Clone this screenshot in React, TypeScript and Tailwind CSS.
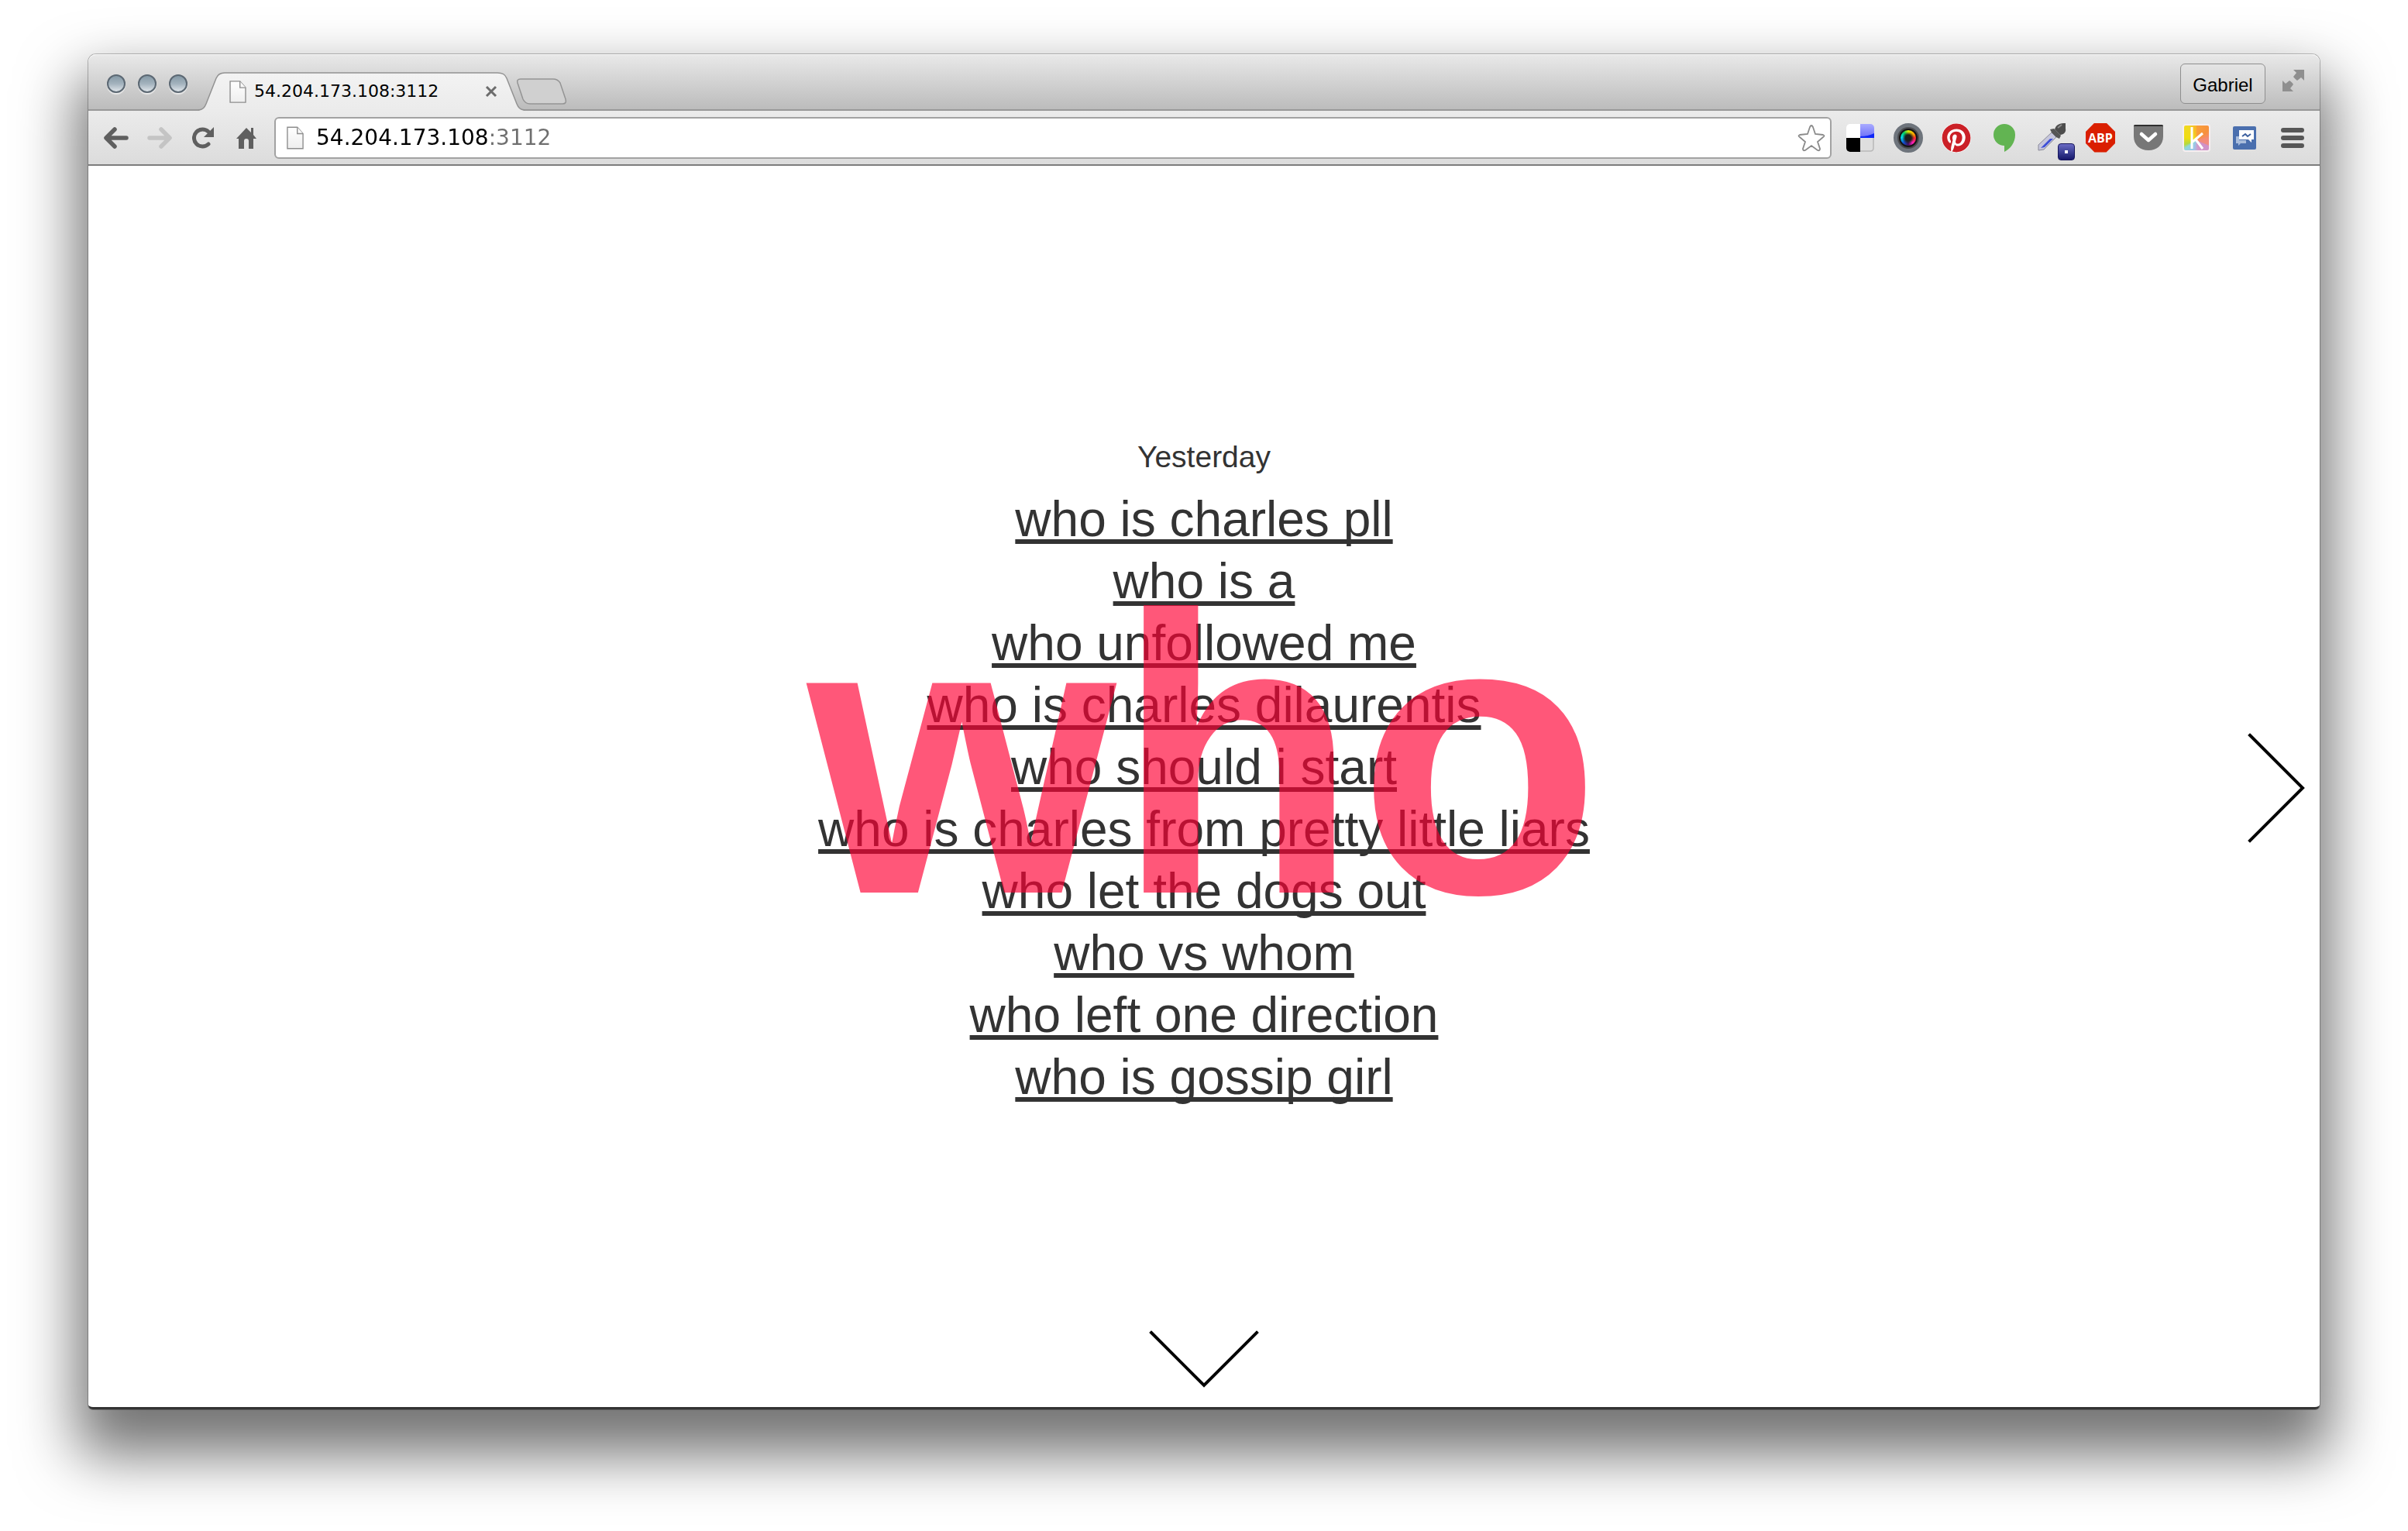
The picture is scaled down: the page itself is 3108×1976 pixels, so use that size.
import type { ReactNode } from "react";
import { FaPinterest } from "react-icons/fa";

const queries = [
  "who is charles pll",
  "who is a",
  "who unfollowed me",
  "who is charles dilaurentis",
  "who should i start",
  "who is charles from pretty little liars",
  "who let the dogs out",
  "who vs whom",
  "who left one direction",
  "who is gossip girl",
];

function PageIcon({ className }: { className: string }) {
  return (
    <svg viewBox="0 0 24 32" className={className} aria-hidden="true">
      <defs>
        <linearGradient id="paper" x1="0" y1="0" x2="0" y2="1">
          <stop offset="0" stopColor="#fff" />
          <stop offset="1" stopColor="#eee" />
        </linearGradient>
      </defs>
      <path d="M1 1h14l8 9v21H1z" fill="url(#paper)" stroke="#8d8d8d" strokeWidth="1.5" />
      <path d="M15 1v9h8" fill="#fafafa" stroke="#8d8d8d" strokeWidth="1.5" />
    </svg>
  );
}

function TrafficLight({ label }: { label: string }) {
  return (
    <button
      aria-label={label}
      className="size-6 rounded-full border-2 border-[#5c6873] bg-linear-to-b from-[#8599a6] via-[#a3b2bd] to-[#dfe5ea] shadow-[0_2px_1px_rgba(255,255,255,0.6)]"
    />
  );
}

function ToolButton({ label, children }: { label: string; children: ReactNode }) {
  return (
    <button aria-label={label} className="relative flex h-[38px] w-[38px] shrink-0 items-center justify-center">
      {children}
    </button>
  );
}

function NavButton({ label, children }: { label: string; children: ReactNode }) {
  return (
    <button aria-label={label} className="flex h-8 w-8 shrink-0 items-center justify-center">
      {children}
    </button>
  );
}

function TitleBar() {
  return (
    <div className="flex h-[73px] items-end justify-between rounded-t-[10px] border-b-2 border-[#989898] bg-linear-to-b from-[#e9e9e9] to-[#bcbcbc] shadow-[inset_0_1px_0_#f8f8f8]">
      <div className="flex h-full items-end">
        <div className="flex gap-4 pb-[21px] pl-6">
          <TrafficLight label="Close" />
          <TrafficLight label="Minimize" />
          <TrafficLight label="Zoom" />
        </div>
        <div className="relative -mb-[2px] ml-[14px] flex h-[50px] w-[422px] items-center pr-9 pl-10">
          <svg viewBox="0 0 422 50" className="absolute inset-0 h-full w-full" aria-hidden="true">
            <defs>
              <linearGradient id="tab" x1="0" y1="0" x2="0" y2="1">
                <stop offset="0" stopColor="#f3f3f3" />
                <stop offset="1" stopColor="#ebebeb" />
              </linearGradient>
            </defs>
            <path
              d="M0 50C6 49 8 47 10 41L23 8C25 3 28 1 34 1H386C393 1 396 3 398 8L411 41C413 47 415 49 421 50Z"
              fill="url(#tab)"
            />
            <path
              d="M0 49C6 48 8 46 10 41L23 8C25 3 28 1 34 1H386C393 1 396 3 398 8L411 41C413 46 415 48 421 49"
              fill="none"
              stroke="#929292"
              strokeWidth="1.5"
            />
          </svg>
          <PageIcon className="relative h-[29px] w-[22px]" />
          <span className="relative ml-[10px] text-[22px] leading-7 text-black">54.204.173.108:3112</span>
          <button aria-label="Close tab" className="relative ml-auto">
            <svg viewBox="0 0 16 16" className="size-4">
              <path d="M2 2l12 12M14 2L2 14" stroke="#6c6c6c" strokeWidth="3" />
            </svg>
          </button>
        </div>
        <button aria-label="New tab" className="-ml-3 pb-[6px]">
          <svg viewBox="0 0 66 34" className="h-[34px] w-[66px]">
            <path
              d="M6 1H48C53 1 55 3 57 6L64 27C65 31 64 33 60 33H18C14 33 11 31 9 27L2 6C1 3 2 1 6 1Z"
              fill="#d0d0d0"
              stroke="#949494"
              strokeWidth="1.5"
            />
          </svg>
        </button>
      </div>
      <div className="flex h-full items-start gap-[22px] pt-3 pr-5">
        <button className="h-[52px] w-[110px] rounded-md border border-[#8f8f8f] bg-linear-to-b from-[#e4e4e4] to-[#cdcdcd] pt-1 font-['Liberation_Sans',Arial,sans-serif] text-2xl text-black">
          Gabriel
        </button>
        <button aria-label="Full screen" className="pt-2">
          <svg viewBox="0 0 28 28" className="size-7">
            <path
              d="M14 0H28V14L24 10L19 14C17 12 15 11 14 9L18 4ZM0 14L4 18L9 14C11 15 13 17 14 19L10 24L14 28H0Z"
              fill="#8f8f8f"
            />
          </svg>
        </button>
      </div>
    </div>
  );
}

function Extensions() {
  return (
    <div className="flex items-center gap-6">
      <ToolButton label="Delicious">
        <svg viewBox="0 0 36 36" className="size-9">
          <defs>
            <clipPath id="delClip">
              <rect width="36" height="36" rx="5" />
            </clipPath>
            <linearGradient id="delBlue" x1="0" y1="0" x2="0" y2="1">
              <stop offset="0" stopColor="#a9abff" />
              <stop offset="1" stopColor="#6a6ef8" />
            </linearGradient>
          </defs>
          <g clipPath="url(#delClip)">
            <rect width="18" height="18" fill="#fff" />
            <rect x="18" width="18" height="18" fill="url(#delBlue)" />
            <path d="M18 16Q28 16 36 12V18H18Z" fill="#1028f8" />
            <rect y="18" width="18" height="18" fill="#000" />
            <rect x="18" y="18" width="18" height="18" fill="#dedede" />
          </g>
          <path d="M18 35H31Q35 35 35 31V18" fill="none" stroke="#b9b9b9" strokeWidth="1.5" />
        </svg>
      </ToolButton>
      <ToolButton label="Camera">
        <span className="flex size-[38px] items-center justify-center rounded-full border-[5px] border-[#6e747c] bg-[#4a4b4e]">
          <span className="flex size-6 items-center justify-center rounded-full border-2 border-[#151515] bg-[conic-gradient(#d8ee00,#ff9a00_60deg,#ff2a30_90deg,#ff20c0_140deg,#401060_180deg,#1050d0_225deg,#00e0f0_275deg,#00d060_320deg,#d8ee00)]">
            <span className="size-4 rounded-full bg-radial from-[#1c1c1c] from-35% to-transparent to-70%" />
          </span>
        </span>
      </ToolButton>
      <ToolButton label="Pinterest">
        <FaPinterest className="size-[38px] rounded-full bg-white text-[#cb2027]" />
      </ToolButton>
      <ToolButton label="Hangouts">
        <svg viewBox="0 0 28 36" className="h-9 w-7">
          <path d="M14 0a14 14 0 0 1 14 14C28 24 22 32 14 36V28A14 14 0 0 1 14 0Z" fill="#62b452" />
        </svg>
      </ToolButton>
      <ToolButton label="Eye dropper">
        <svg viewBox="0 0 38 38" className="size-[38px]">
          <path d="M1 35V28L18 12L24 18L8 34Z" fill="#c6c6dc" stroke="#8a8a98" />
          <path d="M4 32L16 20H20L9 31Z" fill="#3d4fd6" />
          <path d="M16 8L21 7L30 16L28 20L24 18L18 12Z" fill="#555" />
          <path d="M22 8C24 1 29 0 36 0V7C37 11 34 15 29 15Z" fill="#4c4c4c" />
          <path d="M26 6L31 2" stroke="#8c8c8c" strokeWidth="2" />
        </svg>
        <span className="absolute top-[26px] left-[26px] flex size-[22px] items-center justify-center rounded-sm border border-[#15155c] bg-linear-to-b from-[#6a6ac4] to-[#17176b]">
          <span className="size-1 bg-white" />
        </span>
      </ToolButton>
      <ToolButton label="Adblock Plus">
        <span className="flex size-[38px] items-center justify-center bg-[#da1f00] font-['Open_Sans',sans-serif] text-base font-bold text-white [clip-path:polygon(30%_0,70%_0,100%_30%,100%_70%,70%_100%,30%_100%,0_70%,0_30%)]">
          ABP
        </span>
      </ToolButton>
      <ToolButton label="Pocket">
        <svg viewBox="0 0 38 34" className="h-[34px] w-[38px]">
          <path d="M0 2Q0 0 2 0H36Q38 0 38 2V15C38 26 30 33 19 33S0 26 0 15Z" fill="#777" />
          <path d="M0 2Q0 0 2 0H36Q38 0 38 2Z" fill="#2e2e2e" />
          <path d="M10 12L19 20L28 12" fill="none" stroke="#fff" strokeWidth="4.5" strokeLinecap="round" strokeLinejoin="round" />
        </svg>
      </ToolButton>
      <ToolButton label="Kippt">
        <span className="flex size-9 items-center justify-center overflow-hidden rounded-sm border-2 border-[#f6eef0] bg-[conic-gradient(from_0deg_at_50%_60%,#f9a03a,#f7903c_50deg,#f58a75_80deg,#f08b82_110deg,#cf90c8_115deg,#d29aca_170deg,#9fc3e8_195deg,#8fd8dc_235deg,#b5d93c_250deg,#f0dd10_285deg,#f0d820_330deg,#f9b32a)]">
          <svg viewBox="0 0 32 32" className="size-8">
            <path d="M10 2V30M24 10L11 21M15 18L24 30" fill="none" stroke="#fff" strokeWidth="3" />
          </svg>
        </span>
      </ToolButton>
      <ToolButton label="Messenger">
        <svg viewBox="0 0 30 30" className="size-[30px]">
          <rect width="30" height="30" rx="2" fill="#4a6fae" />
          <path d="M4 13H8V18H17V22H10L7 25V22H4Z" fill="#a9bddc" />
          <path d="M8 5H27V17H24V21L20 17H8Z" fill="#fff" />
          <path d="M12 13L16 10L19 13L23 10" fill="none" stroke="#3b5f9e" strokeWidth="2" />
        </svg>
      </ToolButton>
      <ToolButton label="Menu">
        <svg viewBox="0 0 30 26" className="h-[26px] w-[30px]">
          <path d="M3 3H27M3 13H27M3 23H27" stroke="#575757" strokeWidth="6" strokeLinecap="round" />
        </svg>
      </ToolButton>
    </div>
  );
}

function Toolbar() {
  return (
    <div className="flex h-[71px] items-center border-b-2 border-[#7d7d7d] bg-linear-to-b from-[#ebebeb] to-[#dcdcdc] pr-4 pl-5">
      <nav className="flex items-center gap-6" aria-label="Browser">
        <NavButton label="Back">
          <svg viewBox="0 0 32 28" className="h-7 w-8">
            <path d="M14 3L3 14L14 25M4 14H29" fill="none" stroke="#5f5f5f" strokeWidth="5.5" strokeLinecap="round" strokeLinejoin="round" />
          </svg>
        </NavButton>
        <NavButton label="Forward">
          <svg viewBox="0 0 32 28" className="h-7 w-8">
            <path d="M18 3L29 14L18 25M28 14H3" fill="none" stroke="#c4c4c4" strokeWidth="5.5" strokeLinecap="round" strokeLinejoin="round" />
          </svg>
        </NavButton>
        <NavButton label="Reload">
          <svg viewBox="0 0 28 28" className="size-7">
            <path d="M21 6A11 11 0 1 0 21 22" fill="none" stroke="#5f5f5f" strokeWidth="5" strokeLinecap="round" />
            <path d="M28 0V13H15Z" fill="#5f5f5f" />
          </svg>
        </NavButton>
        <NavButton label="Home">
          <svg viewBox="0 0 26 28" className="h-7 w-[26px]">
            <path d="M13 1L19 7V1H22V10L26 15H22V28H16V18Q16 15 13 15T10 18V28H3V15H0Z" fill="#5f5f5f" />
          </svg>
        </NavButton>
      </nav>
      <div className="mr-[18px] ml-5 flex h-[54px] flex-1 items-center rounded-md border-2 border-[#a2a2a2] bg-white pr-[6px] pl-[14px]">
        <PageIcon className="h-[30px] w-[22px]" />
        <input
          aria-label="Address"
          readOnly
          defaultValue="54.204.173.108:3112"
          className="ml-4 min-w-0 flex-1 bg-linear-to-r from-black from-[222px] to-[#6f6f6f] to-[222px] bg-clip-text text-[28px] leading-9 text-transparent outline-none"
        />
        <button aria-label="Bookmark">
          <svg viewBox="0 0 36 36" className="size-9">
            <path
              d="M16 4Q18 0 20 4L23 13L33 14Q36 15 33 17L26 23L29 32Q29 35 26 34L18 28L10 34Q7 35 7 32L10 23L3 17Q0 15 3 14L13 13Z"
              fill="#fff"
              stroke="#8a8a8a"
              strokeWidth="1.8"
            />
          </svg>
        </button>
      </div>
      <Extensions />
    </div>
  );
}

function Suggestions() {
  return (
    <main className="relative flex flex-1 flex-col items-center justify-center font-['Liberation_Sans',Arial,sans-serif] text-[#333]">
      <h2 className="mb-4 text-[39px] leading-12">Yesterday</h2>
      <ul className="mb-[34px] text-center text-[64px] leading-20">
        {queries.map((query) => (
          <li key={query}>
            <a href="#" className="underline decoration-[6px] underline-offset-[4px] [text-decoration-skip-ink:none]">
              {query}
            </a>
          </li>
        ))}
      </ul>
      <div className="pointer-events-none absolute inset-0 flex items-center justify-center pb-20">
        <h1 className="text-[512px] leading-none font-bold text-[#ff0033]/66">who</h1>
      </div>
      <button aria-label="Next day" className="absolute top-1 right-5 bottom-0 my-auto h-[140px]">
        <svg viewBox="0 0 72 140" className="h-[140px] w-[72px] overflow-visible">
          <path d="M2 2L70 70L2 138" fill="none" stroke="#000" strokeWidth="4" strokeLinecap="square" />
        </svg>
      </button>
      <button aria-label="Next word" className="absolute inset-x-0 bottom-[26px] mx-auto w-[140px]">
        <svg viewBox="0 0 140 72" className="h-[72px] w-[140px] overflow-visible">
          <path d="M2 2L70 70L138 2" fill="none" stroke="#000" strokeWidth="4" strokeLinecap="square" />
        </svg>
      </button>
    </main>
  );
}

export default function App() {
  return (
    <div className="flex min-h-screen flex-col bg-white px-[114px] pt-[70px] pb-[157px] font-['DejaVu_Sans',sans-serif]">
      <div className="flex flex-1 flex-col rounded-t-[10px] rounded-b-md border-b-[3px] border-[#333] bg-white shadow-[0_0_0_1px_rgba(0,0,0,0.25),0_44px_76px_15px_rgba(0,0,0,0.55)]">
        <TitleBar />
        <Toolbar />
        <Suggestions />
      </div>
    </div>
  );
}
